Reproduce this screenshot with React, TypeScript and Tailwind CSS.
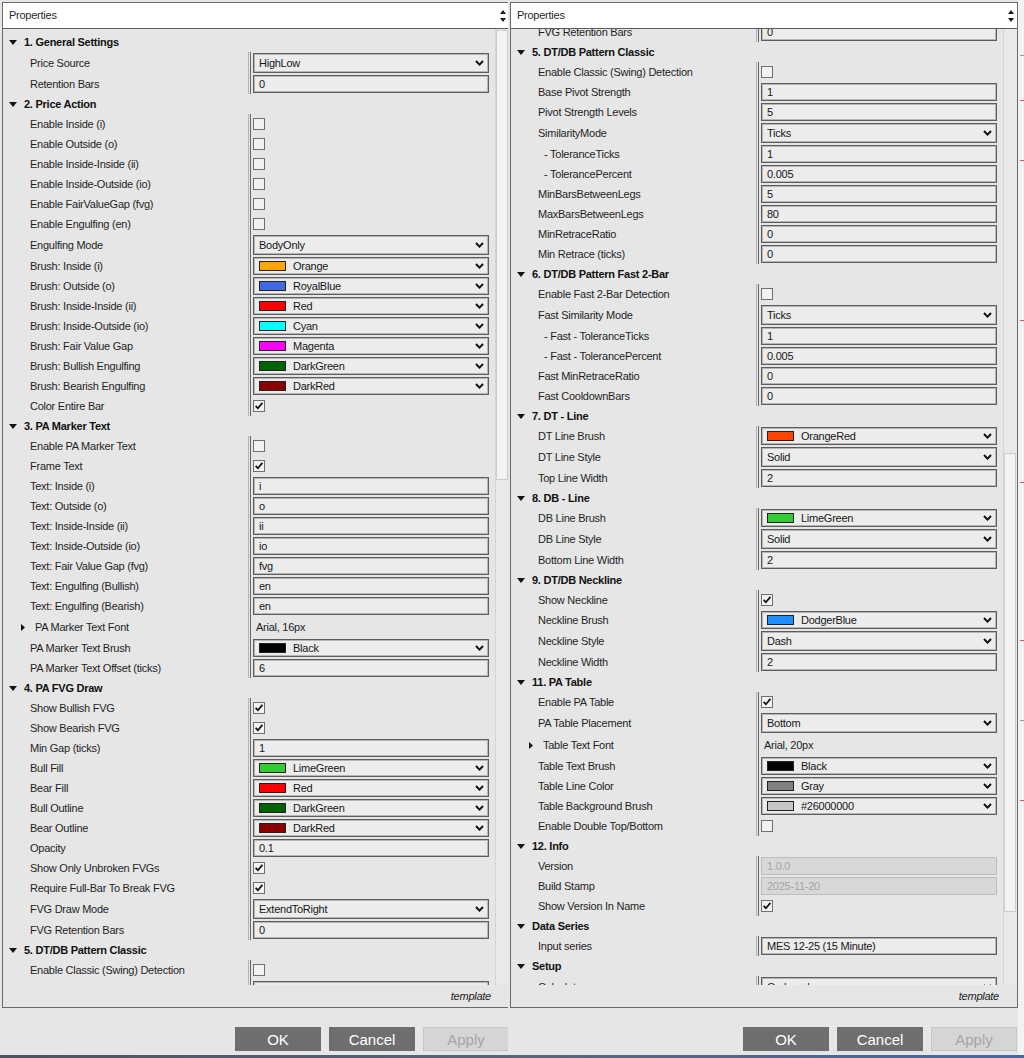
import { useLayoutEffect, useRef } from 'react';
import type { ReactNode } from 'react';

type Row =
  | { kind: 'group'; label: string }
  | { kind: 'check'; label: string; on: boolean }
  | { kind: 'text'; label: string; value: string; sub?: boolean; disabled?: boolean }
  | { kind: 'select'; label: string; value: string }
  | { kind: 'brush'; label: string; value: string; swatch: string }
  | { kind: 'font'; label: string; value: string };

const rows: Row[] = [
  { kind: 'group', label: '1. General Settings' },
  { kind: 'select', label: 'Price Source', value: 'HighLow' },
  { kind: 'text', label: 'Retention Bars', value: '0' },
  { kind: 'group', label: '2. Price Action' },
  { kind: 'check', label: 'Enable Inside (i)', on: false },
  { kind: 'check', label: 'Enable Outside (o)', on: false },
  { kind: 'check', label: 'Enable Inside-Inside (ii)', on: false },
  { kind: 'check', label: 'Enable Inside-Outside (io)', on: false },
  { kind: 'check', label: 'Enable FairValueGap (fvg)', on: false },
  { kind: 'check', label: 'Enable Engulfing (en)', on: false },
  { kind: 'select', label: 'Engulfing Mode', value: 'BodyOnly' },
  { kind: 'brush', label: 'Brush: Inside (i)', value: 'Orange', swatch: 'bg-[#ffa500]' },
  { kind: 'brush', label: 'Brush: Outside (o)', value: 'RoyalBlue', swatch: 'bg-[#4169e1]' },
  { kind: 'brush', label: 'Brush: Inside-Inside (ii)', value: 'Red', swatch: 'bg-[#ff0000]' },
  { kind: 'brush', label: 'Brush: Inside-Outside (io)', value: 'Cyan', swatch: 'bg-[#00ffff]' },
  { kind: 'brush', label: 'Brush: Fair Value Gap', value: 'Magenta', swatch: 'bg-[#ff00ff]' },
  { kind: 'brush', label: 'Brush: Bullish Engulfing', value: 'DarkGreen', swatch: 'bg-[#006400]' },
  { kind: 'brush', label: 'Brush: Bearish Engulfing', value: 'DarkRed', swatch: 'bg-[#8b0000]' },
  { kind: 'check', label: 'Color Entire Bar', on: true },
  { kind: 'group', label: '3. PA Marker Text' },
  { kind: 'check', label: 'Enable PA Marker Text', on: false },
  { kind: 'check', label: 'Frame Text', on: true },
  { kind: 'text', label: 'Text: Inside (i)', value: 'i' },
  { kind: 'text', label: 'Text: Outside (o)', value: 'o' },
  { kind: 'text', label: 'Text: Inside-Inside (ii)', value: 'ii' },
  { kind: 'text', label: 'Text: Inside-Outside (io)', value: 'io' },
  { kind: 'text', label: 'Text: Fair Value Gap (fvg)', value: 'fvg' },
  { kind: 'text', label: 'Text: Engulfing (Bullish)', value: 'en' },
  { kind: 'text', label: 'Text: Engulfing (Bearish)', value: 'en' },
  { kind: 'font', label: 'PA Marker Text Font', value: 'Arial, 16px' },
  { kind: 'brush', label: 'PA Marker Text Brush', value: 'Black', swatch: 'bg-[#000000]' },
  { kind: 'text', label: 'PA Marker Text Offset (ticks)', value: '6' },
  { kind: 'group', label: '4. PA FVG Draw' },
  { kind: 'check', label: 'Show Bullish FVG', on: true },
  { kind: 'check', label: 'Show Bearish FVG', on: true },
  { kind: 'text', label: 'Min Gap (ticks)', value: '1' },
  { kind: 'brush', label: 'Bull Fill', value: 'LimeGreen', swatch: 'bg-[#32cd32]' },
  { kind: 'brush', label: 'Bear Fill', value: 'Red', swatch: 'bg-[#ff0000]' },
  { kind: 'brush', label: 'Bull Outline', value: 'DarkGreen', swatch: 'bg-[#006400]' },
  { kind: 'brush', label: 'Bear Outline', value: 'DarkRed', swatch: 'bg-[#8b0000]' },
  { kind: 'text', label: 'Opacity', value: '0.1' },
  { kind: 'check', label: 'Show Only Unbroken FVGs', on: true },
  { kind: 'check', label: 'Require Full-Bar To Break FVG', on: true },
  { kind: 'select', label: 'FVG Draw Mode', value: 'ExtendToRight' },
  { kind: 'text', label: 'FVG Retention Bars', value: '0' },
  { kind: 'group', label: '5. DT/DB Pattern Classic' },
  { kind: 'check', label: 'Enable Classic (Swing) Detection', on: false },
  { kind: 'text', label: 'Base Pivot Strength', value: '1' },
  { kind: 'text', label: 'Pivot Strength Levels', value: '5' },
  { kind: 'select', label: 'SimilarityMode', value: 'Ticks' },
  { kind: 'text', label: '- ToleranceTicks', value: '1', sub: true },
  { kind: 'text', label: '- TolerancePercent', value: '0.005', sub: true },
  { kind: 'text', label: 'MinBarsBetweenLegs', value: '5' },
  { kind: 'text', label: 'MaxBarsBetweenLegs', value: '80' },
  { kind: 'text', label: 'MinRetraceRatio', value: '0' },
  { kind: 'text', label: 'Min Retrace (ticks)', value: '0' },
  { kind: 'group', label: '6. DT/DB Pattern Fast 2-Bar' },
  { kind: 'check', label: 'Enable Fast 2-Bar Detection', on: false },
  { kind: 'select', label: 'Fast Similarity Mode', value: 'Ticks' },
  { kind: 'text', label: '- Fast - ToleranceTicks', value: '1', sub: true },
  { kind: 'text', label: '- Fast - TolerancePercent', value: '0.005', sub: true },
  { kind: 'text', label: 'Fast MinRetraceRatio', value: '0' },
  { kind: 'text', label: 'Fast CooldownBars', value: '0' },
  { kind: 'group', label: '7. DT - Line' },
  { kind: 'brush', label: 'DT Line Brush', value: 'OrangeRed', swatch: 'bg-[#ff4500]' },
  { kind: 'select', label: 'DT Line Style', value: 'Solid' },
  { kind: 'text', label: 'Top Line Width', value: '2' },
  { kind: 'group', label: '8. DB - Line' },
  { kind: 'brush', label: 'DB Line Brush', value: 'LimeGreen', swatch: 'bg-[#32cd32]' },
  { kind: 'select', label: 'DB Line Style', value: 'Solid' },
  { kind: 'text', label: 'Bottom Line Width', value: '2' },
  { kind: 'group', label: '9. DT/DB Neckline' },
  { kind: 'check', label: 'Show Neckline', on: true },
  { kind: 'brush', label: 'Neckline Brush', value: 'DodgerBlue', swatch: 'bg-[#1e90ff]' },
  { kind: 'select', label: 'Neckline Style', value: 'Dash' },
  { kind: 'text', label: 'Neckline Width', value: '2' },
  { kind: 'group', label: '11. PA Table' },
  { kind: 'check', label: 'Enable PA Table', on: true },
  { kind: 'select', label: 'PA Table Placement', value: 'Bottom' },
  { kind: 'font', label: 'Table Text Font', value: 'Arial, 20px' },
  { kind: 'brush', label: 'Table Text Brush', value: 'Black', swatch: 'bg-[#000000]' },
  { kind: 'brush', label: 'Table Line Color', value: 'Gray', swatch: 'bg-[#808080]' },
  { kind: 'brush', label: 'Table Background Brush', value: '#26000000', swatch: 'bg-[#c6c6c6]' },
  { kind: 'check', label: 'Enable Double Top/Bottom', on: false },
  { kind: 'group', label: '12. Info' },
  { kind: 'text', label: 'Version', value: '1.0.0', disabled: true },
  { kind: 'text', label: 'Build Stamp', value: '2025-11-20', disabled: true },
  { kind: 'check', label: 'Show Version In Name', on: true },
  { kind: 'group', label: 'Data Series' },
  { kind: 'text', label: 'Input series', value: 'MES 12-25 (15 Minute)' },
  { kind: 'group', label: 'Setup' },
  { kind: 'select', label: 'Calculate', value: 'On bar close' },
];

const indexOf = (label: string) => rows.findIndex((r) => r.label === label);

// the two copies of the grid show different stretches of the same list
const topRows = rows.slice(0, indexOf('Base Pivot Strength') + 1);
const lowerRows = rows.slice(indexOf('FVG Retention Bars'));

const txt = 'text-[11px] leading-none tracking-[-0.25px]';

function Caret() {
  return (
    <svg width="8" height="5" viewBox="0 0 8 5" className="shrink-0">
      <path d="M0 0H8L4 5Z" fill="#141414" />
    </svg>
  );
}

function Expander() {
  return (
    <svg width="4" height="7" viewBox="0 0 4 7" className="shrink-0">
      <path d="M0 0L4 3.5L0 7Z" fill="#141414" />
    </svg>
  );
}

function Chevron() {
  return (
    <svg width="9" height="6" viewBox="0 0 9 6" className="ml-auto mr-[4px] shrink-0">
      <path d="M1 1L4.5 4.6L8 1" fill="none" stroke="#111" strokeWidth="2" />
    </svg>
  );
}

function CheckBox({ on }: { on: boolean }) {
  return (
    <div className="flex h-[12px] w-[12px] items-center justify-center border border-[#6f6f6f] bg-[#f2f2f2]">
      {on && (
        <svg width="10" height="10" viewBox="0 0 10 10">
          <path d="M1.6 4.8L3.9 7.2L8.4 1.9" fill="none" stroke="#111" strokeWidth="1.7" />
        </svg>
      )}
    </div>
  );
}

// value column: light rule, then the dark one, then the editor
function ValueCell({ children }: { children: ReactNode }) {
  return (
    <div className="flex flex-1 border-l border-[#b4b4b4] pl-px">
      <div className="flex flex-1 items-center border-l border-[#676767] pl-[2px]">{children}</div>
    </div>
  );
}

function Box({ tall, disabled, children }: { tall?: boolean; disabled?: boolean; children: ReactNode }) {
  return (
    <div
      className={
        (tall ? 'h-[20px] ' : 'h-[18px] ') +
        (disabled
          ? 'border-[#bdbdbd] bg-[#d8d8d8] text-[#a4a4a4] '
          : 'border-[#5d5d5d] bg-[#ececec] text-[#161616] shadow-[inset_0_0_0_1px_#b6b6b6] ') +
        'flex w-[236px] items-center border pl-[5px] ' +
        txt
      }
    >
      {children}
    </div>
  );
}

function PropRow({ row }: { row: Row }) {
  if (row.kind === 'group') {
    return (
      <div className="flex h-[20px] items-center pl-[6px]">
        <Caret />
        <span className={'ml-[7px] font-bold text-[#111] ' + txt}>{row.label}</span>
      </div>
    );
  }

  const height = row.kind === 'select' || row.kind === 'font' ? 'h-[22px]' : 'h-[20px]';

  return (
    <div className={'flex ' + height}>
      {row.kind === 'font' ? (
        <div className="flex w-[245px] shrink-0 items-center pl-[18px]">
          <Expander />
          <span className={'ml-[10px] text-[#1e1e1e] ' + txt}>{row.label}</span>
        </div>
      ) : (
        <div
          className={
            'flex w-[245px] shrink-0 items-center text-[#1e1e1e] ' +
            (row.kind === 'text' && row.sub ? 'pl-[33px] ' : 'pl-[27px] ') +
            txt
          }
        >
          {row.label}
        </div>
      )}
      <ValueCell>
        {row.kind === 'check' && <CheckBox on={row.on} />}
        {row.kind === 'text' && <Box disabled={row.disabled}>{row.value}</Box>}
        {row.kind === 'select' && (
          <Box tall>
            {row.value}
            <Chevron />
          </Box>
        )}
        {row.kind === 'brush' && (
          <Box>
            <span className={'mr-[7px] h-[10px] w-[27px] shrink-0 border border-[#222] ' + row.swatch} />
            {row.value}
            <Chevron />
          </Box>
        )}
        {row.kind === 'font' && <span className={'pl-[3px] text-[#1e1e1e] ' + txt}>{row.value}</span>}
      </ValueCell>
    </div>
  );
}

function Spinner() {
  return (
    <div className="mr-[3px] flex flex-col items-center gap-[4px]">
      <svg width="6" height="4" viewBox="0 0 6 4">
        <path d="M0 4H6L3 0Z" fill="#1a1a1a" />
      </svg>
      <svg width="6" height="4" viewBox="0 0 6 4">
        <path d="M0 0H6L3 4Z" fill="#1a1a1a" />
      </svg>
    </div>
  );
}

function PropertyDialog({ items, scroll, thumb }: { items: Row[]; scroll: number; thumb: string }) {
  const listRef = useRef<HTMLDivElement>(null);

  useLayoutEffect(() => {
    if (listRef.current) listRef.current.scrollTop = scroll;
  }, [scroll]);

  return (
    <div className="flex h-[1006px] w-[508px] shrink-0 flex-col border border-[#6a6a6a] bg-[#e6e6e6]">
      <div className="flex h-[26px] shrink-0 items-center justify-between border-b border-[#5a5a5a] bg-white">
        <span className={'pl-[6px] text-[#2a2a2a] ' + txt}>Properties</span>
        <Spinner />
      </div>
      <div className="flex h-[956px] shrink-0">
        <div ref={listRef} className="flex-1 overflow-hidden">
          <div className="pt-[3px]">
            {items.map((r, i) => (
              <PropRow key={i} row={r} />
            ))}
          </div>
        </div>
        <div className="w-[14px] shrink-0 border-l border-[#d4d4d4] bg-[#e9e9e9]">
          <div className={'w-[12px] border border-[#cdcdcd] bg-[#f3f3f3] ' + thumb} />
        </div>
      </div>
      <div className="flex h-[22px] shrink-0 items-center justify-end pr-[18px]">
        <span className={'italic text-[#222] ' + txt}>template</span>
      </div>
    </div>
  );
}

function DialogButtons() {
  return (
    <div className="flex w-[508px] shrink-0 justify-end gap-[8px] pr-px pt-[19px]">
      <button className="h-[24px] w-[86px] bg-[#6e6e6e] text-[15px] leading-none text-white">OK</button>
      <button className="h-[24px] w-[86px] bg-[#6e6e6e] text-[15px] leading-none text-white">Cancel</button>
      <button className="h-[24px] w-[86px] border border-[#c6c6c6] bg-[#d5d5d5] text-[15px] leading-none text-[#a6a6a6]">
        Apply
      </button>
    </div>
  );
}

// sliver of the chart window peeking out past the right dialog
function ChartEdge() {
  const marks = [
    'top-[55px] bg-[#9a9a9a]',
    'top-[100px] bg-[#e05050]',
    'top-[160px] bg-[#e05050]',
    'top-[320px] bg-[#e05050]',
    'top-[482px] bg-[#e05050]',
    'top-[640px] bg-[#e05050]',
    'top-[720px] bg-[#9a9a9a]',
    'top-[800px] bg-[#e05050]',
  ];
  return (
    <div className="relative w-[6px] shrink-0 bg-[#f2f2f2]">
      {marks.map((m) => (
        <span key={m} className={'absolute left-[2px] h-px w-[4px] ' + m} />
      ))}
    </div>
  );
}

export default function App() {
  return (
    <div className="flex h-[1058px] w-[1024px] flex-col overflow-hidden bg-[#e6e6e6] font-['Liberation_Sans',Arial,sans-serif]">
      <div className="flex flex-1">
        <div className="flex w-[508px] shrink-0 flex-col overflow-hidden pl-[2px] pt-[2px]">
          <PropertyDialog items={topRows} scroll={0} thumb="mt-px h-[450px]" />
          <DialogButtons />
        </div>
        <div className="flex w-[516px] shrink-0">
          <div className="flex w-[510px] shrink-0 flex-col pl-[2px] pt-[2px]">
            <PropertyDialog items={lowerRows} scroll={10} thumb="mt-[424px] h-[459px]" />
            <DialogButtons />
          </div>
          <ChartEdge />
        </div>
      </div>
      <div className="h-[3px] shrink-0 bg-gradient-to-r from-[#4a5566] via-[#56657a] to-[#3f6aa8]" />
    </div>
  );
}
